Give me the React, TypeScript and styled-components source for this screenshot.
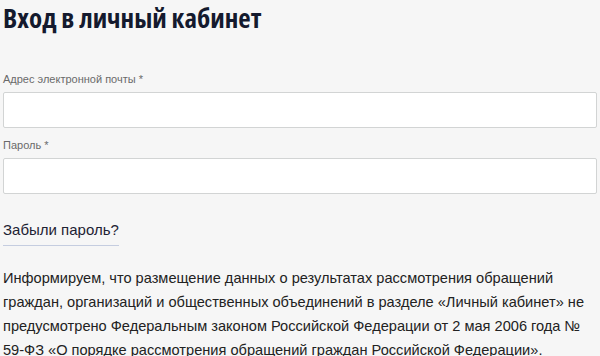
import styled, { createGlobalStyle } from "styled-components";

const Global = createGlobalStyle`
  html, body {
    margin: 0;
    padding: 0;
    background: #f6f6f6;
  }
  body {
    font-family: "Liberation Sans", Arial, sans-serif;
    color: #222;
  }
`;

const Page = styled.div`
  padding: 4px 3px 0 3px;
  display: flex;
  flex-direction: column;
`;

const Title = styled.h1`
  margin: 0;
  font-family: "Open Sans", "Liberation Sans", sans-serif;
  font-stretch: 75%;
  font-weight: 700;
  font-size: 27px;
  line-height: 28px;
  color: #141a2e;
`;

const Field = styled.div<{ $top: number }>`
  display: flex;
  flex-direction: column;
  gap: 6px;
  margin-top: ${(p) => p.$top}px;
`;

const Label = styled.label`
  font-size: 11px;
  line-height: 13px;
  color: #6a6a6a;
`;

const Input = styled.input`
  box-sizing: border-box;
  width: 100%;
  height: 36px;
  border: 1px solid #d2d4d4;
  border-radius: 2px;
  background: #fff;
  outline: none;
  font-size: 14px;
  padding: 0 10px;
`;

const Forgot = styled.a`
  align-self: flex-start;
  margin-top: 26px;
  font-size: 15px;
  line-height: 20px;
  color: #1d2233;
  text-decoration: none;
  padding-bottom: 5px;
  border-bottom: 1px solid #c5cde0;
`;

const Note = styled.p`
  margin: 20px 0 0 0;
  font-size: 14.6px;
  line-height: 24px;
  color: #222;
`;

export default function App() {
  return (
    <>
      <Global />
      <Page>
        <Title>Вход в личный кабинет</Title>
        <Field $top={41}>
          <Label>Адрес электронной почты *</Label>
          <Input type="email" />
        </Field>
        <Field $top={11}>
          <Label>Пароль *</Label>
          <Input type="password" />
        </Field>
        <Forgot href="#">Забыли пароль?</Forgot>
        <Note>
          Информируем, что размещение данных о результатах рассмотрения обращений
          граждан, организаций и общественных объединений в разделе «Личный кабинет» не
          предусмотрено Федеральным законом Российской Федерации от 2 мая 2006 года №
          59-ФЗ «О порядке рассмотрения обращений граждан Российской Федерации».
        </Note>
      </Page>
    </>
  );
}
